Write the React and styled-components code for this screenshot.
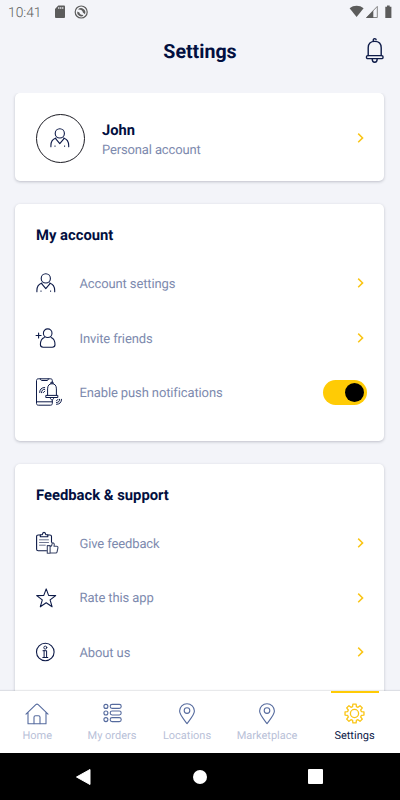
import React, { useState } from "react";
import styled, { createGlobalStyle } from "styled-components";

const GlobalStyle = createGlobalStyle`
  * {
    box-sizing: border-box;
  }
  body {
    margin: 0;
    background-color: #f3f4f9;
    font-family: Roboto, "Liberation Sans", sans-serif;
    text-rendering: geometricPrecision;
  }
  svg {
    display: block;
    overflow: visible;
  }
`;

const Screen = styled.div`
  width: 400px;
  height: 800px;
  display: flex;
  flex-direction: column;
  overflow: hidden;
  background-color: #f3f4f9;
`;

const StatusBar = styled.div`
  height: 24px;
  flex: none;
  display: flex;
  align-items: center;
  padding: 0 7px 0 8px;
  color: #5c5c5c;
`;

const Clock = styled.span`
  width: 46px;
  padding-top: 1px;
  font-size: 13.8px;
  line-height: 24px;
  font-weight: 300;
`;

const Spacer = styled.div`
  flex: 1;
`;

const Header = styled.header`
  height: 69.3px;
  flex: none;
  display: grid;
  grid-template-columns: 1fr auto 1fr;
  align-items: start;
  padding: 14px 15px 0;
`;

const PageTitle = styled.h1`
  grid-column: 2;
  margin: 0;
  padding-top: 1px;
  font-size: 19.6px;
  line-height: 26px;
  font-weight: 700;
  color: #020f40;
`;

const BellButton = styled.div`
  justify-self: end;
`;

const Content = styled.main`
  flex: 1;
  min-height: 0;
  overflow: hidden;
  display: flex;
  flex-direction: column;
  gap: 22.7px;
  padding: 0 15.7px 0 15.3px;
`;

const Card = styled.section`
  flex: none;
  height: ${({ $height }) => $height};
  padding: 0 17px 0 20.7px;
  border-radius: 5px;
  background-color: white;
  box-shadow: 0 1px 3px rgba(30, 35, 60, 0.25);
`;

const Profile = styled(Card)`
  display: flex;
  align-items: center;
  padding-top: 1.5px;
`;

const Avatar = styled.div`
  width: 49px;
  height: 49px;
  margin-right: 17px;
  border: 1px solid #1c1c24;
  border-radius: 50%;
  display: flex;
  align-items: center;
  justify-content: center;
`;

const ProfileText = styled.div`
  flex: 1;
  padding-top: 6px;
`;

const Name = styled.div`
  font-size: 14.7px;
  line-height: 20px;
  font-weight: 700;
  color: #020f40;
`;

const AccountType = styled.div`
  font-size: 13px;
  line-height: 22px;
  letter-spacing: -0.14px;
  color: #7d8aae;
`;

const CardTitle = styled.h2`
  margin: 0;
  padding-top: 21px;
  height: 52px;
  font-size: 14.8px;
  line-height: 20px;
  font-weight: 700;
  color: #020f40;
`;

const Row = styled.div`
  height: 54.6px;
  display: flex;
  align-items: center;
`;

const RowIcon = styled.div`
  width: 43.5px;
  flex: none;
`;

const RowLabel = styled.div`
  flex: 1;
  font-size: 13px;
  line-height: 20px;
  letter-spacing: -0.12px;
  padding-top: 3.4px;
  color: #7d8aae;
`;

const ArrowBox = styled.div`
  width: 10px;
  flex: none;
`;

const Toggle = styled.button`
  width: 44px;
  height: 25px;
  padding: 3px;
  border: 0;
  border-radius: 13px;
  display: flex;
  justify-content: ${({ $on }) => ($on ? "flex-end" : "flex-start")};
  align-items: center;
  background-color: ${({ $on }) => ($on ? "#ffcb05" : "#c8cddb")};
`;

const Knob = styled.span`
  width: 19.5px;
  height: 19.5px;
  border-radius: 50%;
  background-color: black;
`;

const TabBar = styled.nav`
  height: 62px;
  flex: none;
  display: grid;
  grid-template-columns: 74.5px 75px 75px 85px 90px;
  background-color: white;
  box-shadow: 0 -1px 1px rgba(30, 35, 60, 0.1);
  position: relative;
`;

const Tab = styled.div`
  display: flex;
  flex-direction: column;
  align-items: center;
  color: ${({ $active }) => ($active ? "#0d1a48" : "#b9c1d8")};
  font-size: 11px;
  line-height: 14px;
`;

const TabMarker = styled.div`
  width: 48px;
  height: 2px;
  margin-bottom: 10px;
  background-color: ${({ $active }) => ($active ? "#ffcb05" : "transparent")};
`;

const TabIcon = styled.div`
  height: 26px;
`;

const SystemBar = styled.div`
  height: 47px;
  flex: none;
  display: grid;
  grid-template-columns: 167px 66px 165px;
  justify-items: center;
  align-items: center;
  background-color: black;
`;

const Icon = ({ w, h, color = "#0d1a48", stroke = 1.1, children }) => (
  <svg
    width={w}
    height={h}
    viewBox={`0 0 ${w} ${h}`}
    fill="none"
    stroke={color}
    strokeWidth={stroke}
    strokeLinecap="round"
    strokeLinejoin="round"
  >
    {children}
  </svg>
);

const PersonIcon = () => (
  <Icon w={20} h={20}>
    <circle cx="9.8" cy="5.4" r="4.6" />
    <path d="M.9 18.8V17.5C.9 14 2.8 11 6 10M18.7 18.8V17.5C18.7 14 16.8 11 13.6 10" />
    <path d="M5.4 10.4 9.8 15.6 14.2 10.4" />
    <path d="M5 17.8v.8M14.6 17.8v.8" strokeWidth="0.8" />
  </Icon>
);

const InviteIcon = () => (
  <Icon w={20} h={20}>
    <circle cx="11.7" cy="5.2" r="4.3" />
    <path d="M8.3 9.4C5.5 10.5 4.4 13 4.4 16.5c0 1.8.9 2.7 2.7 2.7h9.2c1.8 0 2.7-.9 2.7-2.7 0-3.5-1.1-6-3.9-7.1" />
    <path d="M2.6 5v5M.1 7.5h5" />
  </Icon>
);

const PushIcon = () => (
  <Icon w={26} h={28} stroke={1}>
    <path d="M16.3 4V2.5c0-1-.6-1.7-1.7-1.7H2.3C1.2.8.5 1.5.5 2.5v23c0 1 .7 1.7 1.8 1.7h12.3c1.1 0 1.7-.7 1.7-1.7v-3" />
    <path d="M4.5 1c0 1 .5 1.5 1.3 1.5h5.2c.8 0 1.3-.5 1.3-1.5M.7 23.8h15.5" />
    <path d="M11.6 17.2v-6.3C11.6 7.5 13.2 5.7 16 5.7s4.4 1.8 4.4 5.2v6.3" fill="white" />
    <path d="M14.9 5.7V4.3h2.2v1.4M10.2 17.4h11.6v2.1H10.2zM14.3 19.6c0 1.5.7 2.2 1.7 2.2s1.7-.7 1.7-2.2" />
    <path d="M3.7 14.5c0-3.2 1.8-5 5-5M5.5 14.7c0-2.2 1.2-3.4 3.2-3.4M7.3 14.6l1.4-1.4" />
    <path d="M25.5 21.3c0 3.2-1.8 5-5 5M23.6 21.3c0 2.1-1.1 3.2-3.1 3.2M20.5 22.8l1.4-1.4" />
  </Icon>
);

const FeedbackIcon = () => (
  <Icon w={23} h={22} stroke={1.1}>
    <path d="M4 3H2.2C1.2 3 .6 3.6.6 4.6v12.6c0 1 .6 1.6 1.6 1.6h8.3M12 3h1.9c1 0 1.6.6 1.6 1.6v5.6" />
    <path d="M4.3 4.8V2.8h2C6.5 1.2 7 .4 8 .4s1.6.8 1.8 2.4h2v2z" />
    <path d="M3.5 7.8h9M3.5 10.5h9M3.5 13.2h5.8" stroke="#4b5475" strokeWidth="0.8" />
    <path d="M11.3 13.6h2.8v7.6h-2.8zM14.1 15c1.6-.8 2.2-2.4 2.2-4.2 1.8 0 2.4 1.4 1.7 3.4h2.7c1 0 1.4.8 1.2 1.6l-.8 4c-.2.8-.6 1.2-1.4 1.2h-5.6" fill="white" stroke="#3c4668" />
  </Icon>
);

const StarIcon = () => (
  <Icon w={20} h={20}>
    <path d="M10.2.9 12.6 7.4 19.7 7.6 14.1 11.9 16.1 18.8 10.2 14.8 4.3 18.8 6.3 11.9.7 7.6 7.8 7.4Z" />
  </Icon>
);

const InfoIcon = () => (
  <Icon w={19} h={20}>
    <circle cx="9.3" cy="10" r="8.8" />
    <circle cx="9.3" cy="5.6" r="1.5" strokeWidth="0.9" />
    <path d="M7 8.7h3.6v6.5M8.1 8.9v6.3M6.8 15.5h5" strokeWidth="1" />
  </Icon>
);

const BellIcon = () => (
  <Icon w={20} h={26} stroke={1.4}>
    <path d="M3.2 17.6V9.8C3.2 5.7 5.6 3.4 9.7 3.4s6.5 2.3 6.5 6.4v7.8" />
    <path d="M8.3 3.2C8 1.6 8.6.6 9.7.6s1.4.5 1.4 1.2" />
    <rect x="1.5" y="17.6" width="16.5" height="3" rx="1.2" />
    <path d="M7.2 20.8c0 2.4.9 3.5 2.5 3.5s2.5-1.1 2.5-3.5" />
  </Icon>
);

const Arrow = () => (
  <ArrowBox>
    <Icon w={7} h={10} color="#fac515" stroke={1.5}>
      <path d="M1.2.6 5.6 4.9 1.2 9.2" strokeLinecap="butt" strokeLinejoin="miter" />
    </Icon>
  </ArrowBox>
);

const PinIcon = ({ color }) => (
  <Icon w={18} h={22} color={color}>
    <path d="M9 20.6C6 16.3 1.6 12 1.6 8.1a7.4 7.4 0 0 1 14.8 0C16.4 12 12 16.3 9 20.6Z" />
    <circle cx="9" cy="7.6" r="2.8" />
  </Icon>
);

const HomeIcon = ({ color }) => (
  <Icon w={24} h={22} color={color}>
    <path d="M1 11.2 10.8 1.7c.8-.7 1.6-.7 2.4 0L23 11.2M3 9.6v11.2h18V9.6" />
    <path d="M9 20.6v-6.3c0-1 .5-1.5 1.5-1.5h3c1 0 1.5.5 1.5 1.5v6.3" />
  </Icon>
);

const OrdersIcon = ({ color }) => (
  <Icon w={19} h={22} color={color}>
    {[3.4, 10, 16.6].map((y) => (
      <g key={y}>
        <circle cx="2.9" cy={y} r="2" />
        <rect x="7.2" y={y - 2} width="11" height="4" rx="1.9" />
      </g>
    ))}
  </Icon>
);

// eight rounded teeth around the hub
const gearPath = () => {
  const points = [];
  for (let i = 0; i < 8; i++) {
    const teeth = [
      [-0.27, 7.1],
      [-0.17, 9.6],
      [0.17, 9.6],
      [0.27, 7.1],
    ];
    teeth.forEach(([offset, r]) => {
      const a = (i * Math.PI) / 4 + offset;
      points.push(`${(10.5 + r * Math.sin(a)).toFixed(2)} ${(10.5 - r * Math.cos(a)).toFixed(2)}`);
    });
  }
  return `M${points.join("L")}Z`;
};

const GearIcon = ({ color }) => (
  <Icon w={21} h={21} color={color} stroke={1.3}>
    <path d={gearPath()} />
    <circle cx="10.5" cy="10.5" r="4.1" />
  </Icon>
);

const StatusIcons = () => (
  <svg width="44" height="14" viewBox="0 0 44 14" fill="#5c5c5c">
    <path d="M.6 3.2C4.6-.1 10.6-.1 14.6 3.2L7.6 12Z" />
    <path d="M17.5 12.5 28.3 1.4v11.1z" fill="none" stroke="#858585" />
    <path d="M17 13 24.3 5.5V13z" />
    <path d="M36.3 1.7H38V.4h2.7v1.3h1.7V13h-6.1z" />
  </svg>
);

const SettingRow = ({ icon, label, children }) => (
  <Row>
    <RowIcon>{icon}</RowIcon>
    <RowLabel>{label}</RowLabel>
    {children || <Arrow />}
  </Row>
);

const tabs = [
  { label: "Home", icon: HomeIcon },
  { label: "My orders", icon: OrdersIcon },
  { label: "Locations", icon: PinIcon },
  { label: "Marketplace", icon: PinIcon },
  { label: "Settings", icon: GearIcon, active: true },
];

const App = () => {
  const [push, setPush] = useState(true);

  return (
    <>
      <GlobalStyle />
      <Screen>
        <StatusBar>
          <Clock>10:41</Clock>
          <svg width="36" height="14" viewBox="0 0 36 14">
            <path d="M4.3.6h5.5c.8 0 1.2.4 1.2 1.2v10c0 .8-.4 1.2-1.2 1.2H2.2C1.4 13 1 12.6 1 11.8V4z" fill="#5c5c5c" />
            <path d="M4.8 2v2M6.8 2v2M8.8 2v2" stroke="#e9eaef" strokeWidth="1" />
            <circle cx="27.2" cy="7" r="6" fill="none" stroke="#5c5c5c" strokeWidth="1.2" />
            <path d="M24 4.6a4.2 4.2 0 0 1 6.9 4.6L28.9 7.6c-.2-2-2.2-3.3-4.9-3zM23.2 6.4l2.2 1c.2 1.6 1.4 2.4 3 2.4l1 1a4.2 4.2 0 0 1-6.2-4.4z" fill="#5c5c5c" />
          </svg>
          <Spacer />
          <StatusIcons />
        </StatusBar>
        <Header>
          <PageTitle>Settings</PageTitle>
          <BellButton>
            <BellIcon />
          </BellButton>
        </Header>
        <Content>
          <Profile $height="88px">
            <Avatar>
              <PersonIcon />
            </Avatar>
            <ProfileText>
              <Name>John</Name>
              <AccountType>Personal account</AccountType>
            </ProfileText>
            <Arrow />
          </Profile>
          <Card $height="237px">
            <CardTitle>My account</CardTitle>
            <SettingRow icon={<PersonIcon />} label="Account settings" />
            <SettingRow icon={<InviteIcon />} label="Invite friends" />
            <SettingRow icon={<PushIcon />} label="Enable push notifications">
              <Toggle $on={push} onClick={() => setPush(!push)}>
                <Knob />
              </Toggle>
            </SettingRow>
          </Card>
          <Card $height="260px">
            <CardTitle>Feedback &amp; support</CardTitle>
            <SettingRow icon={<FeedbackIcon />} label="Give feedback" />
            <SettingRow icon={<StarIcon />} label="Rate this app" />
            <SettingRow icon={<InfoIcon />} label="About us" />
          </Card>
        </Content>
        <TabBar>
          {tabs.map(({ label, icon: TabGlyph, active }) => (
            <Tab key={label} $active={active}>
              <TabMarker $active={active} />
              <TabIcon>
                <TabGlyph color={active ? "#fac515" : "#566b9e"} />
              </TabIcon>
              {label}
            </Tab>
          ))}
        </TabBar>
        <SystemBar>
          <svg width="15" height="16" viewBox="0 0 15 16">
            <path d="M.5 8 14 .5v15z" fill="white" stroke="white" strokeLinejoin="round" />
          </svg>
          <svg width="14" height="14" viewBox="0 0 14 14">
            <circle cx="7" cy="7" r="7" fill="white" />
          </svg>
          <svg width="15" height="15" viewBox="0 0 15 15">
            <rect width="15" height="15" rx="1" fill="white" />
          </svg>
        </SystemBar>
      </Screen>
    </>
  );
};

export default App;
